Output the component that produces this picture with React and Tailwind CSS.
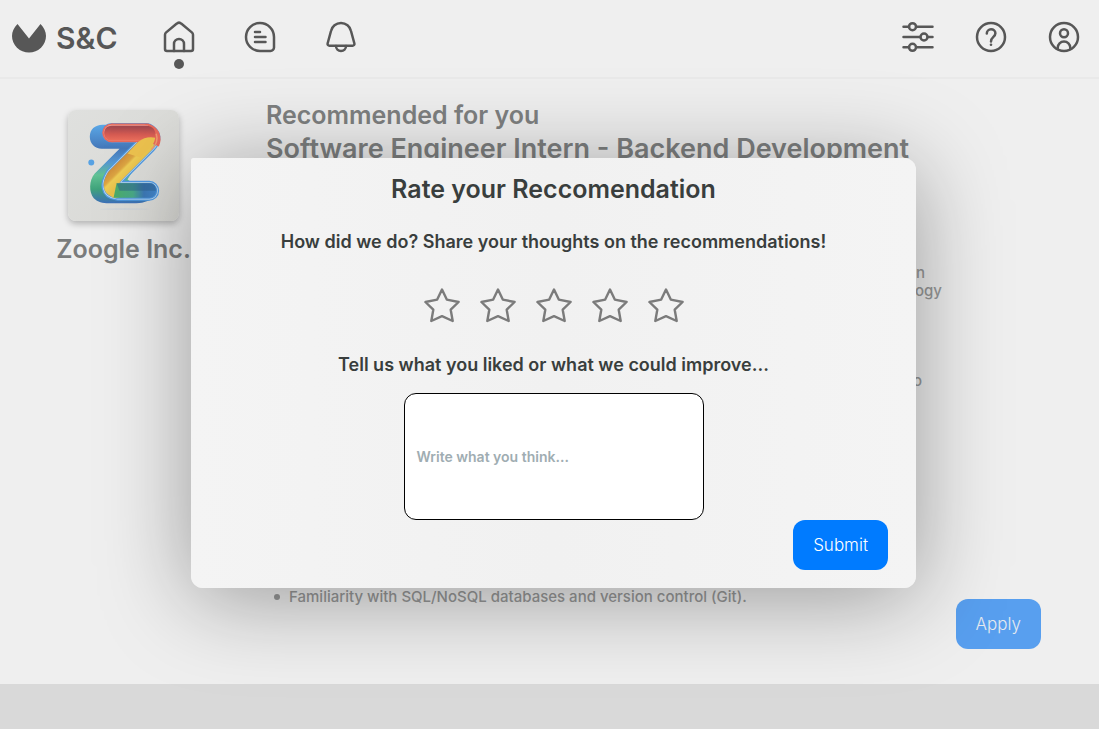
import React from "react";

const line = {
  fill: "none",
  stroke: "currentColor",
  strokeWidth: 2.5,
  strokeLinecap: "round",
  strokeLinejoin: "round",
};

function Icon({ children }) {
  return (
    <svg viewBox="0 0 32 32" className="block size-8" aria-hidden="true" {...line}>
      {children}
    </svg>
  );
}

function HomeIcon() {
  return (
    <Icon>
      <path d="M2 13.8c0-.9.3-1.6.9-2.200L13.500 2.800c1.500-1.500 3.500-1.500 5 0l10.600 8.800c.6.6.9 1.300.9 2.200V28a2 2 0 0 1-2 2H4a2 2 0 0 1-2-2z" />
      <path d="M11 30v-7a5 5 0 0 1 10 0v7" />
    </Icon>
  );
}

function ChatIcon() {
  return (
    <Icon>
      <path d="M16 2a14 14 0 1 0 0 28h10.500a3.500 3.500 0 0 0 3.500-3.500V16A14 14 0 0 0 16 2z" />
      <path d="M11 11h5M11 16h10.500M11 21h10.500" />
    </Icon>
  );
}

function BellIcon() {
  return (
    <Icon>
      <path d="M16 2C11 2 7 5.500 6 10L2.600 22.500A1.800 1.800 0 0 0 4.400 24.700h23.200a1.800 1.800 0 0 0 1.800-2.200L26 10c-1-4.500-5-8-10-8z" />
      <path d="M11 25a5 5 0 0 0 10 0" />
    </Icon>
  );
}

function SlidersIcon() {
  return (
    <Icon>
      <path d="M1.500 5.700H7M15 5.700h15.500M1.500 16H18M26 16h4.500M1.500 26.300H7M15 26.300h15.500" />
      <circle cx="10.500" cy="5.700" r="3.500" />
      <circle cx="22" cy="16" r="3.500" />
      <circle cx="10.500" cy="26.300" r="3.500" />
    </Icon>
  );
}

function HelpIcon() {
  return (
    <Icon>
      <circle cx="16" cy="16" r="14" />
      <path d="M11.800 12.500A4.200 4.200 0 0 1 16 8.300c2.500 0 4.400 1.700 4.400 4 0 3.700-4.400 3.500-4.400 8.200" />
      <circle cx="16" cy="23.700" r="1.300" fill="currentColor" stroke="none" />
    </Icon>
  );
}

function UserIcon() {
  return (
    <Icon>
      <circle cx="16" cy="16" r="14" />
      <circle cx="16" cy="12.300" r="4" />
      <path d="M9.700 28v-1.200a6.300 6.300 0 0 1 12.600 0V28" />
    </Icon>
  );
}

function BrandMark() {
  return (
    <svg viewBox="0 0 34 30" className="block h-[30px] w-[34px]" aria-hidden="true">
      <path
        d="M5.500 1 17 15.500 28.500 1C32 4.500 34 8.500 34 13a17 16.500 0 0 1-34 0C0 8.500 2 4.500 5.500 1z"
        fill="currentColor"
      />
    </svg>
  );
}

function ZoogleLogo() {
  return (
    <svg
      viewBox="0 0 112 112"
      className="block size-[111px] rounded-lg shadow-[0_3px_6px_rgba(0,0,0,0.25)]"
      role="img"
      aria-label="Zoogle logo"
    >
      <defs>
        <linearGradient id="tile" x1="0" y1="0" x2="1" y2="1">
          <stop offset="0" stopColor="#dfe0de" />
          <stop offset="1" stopColor="#d8d8d4" />
        </linearGradient>
        <linearGradient id="back" gradientUnits="userSpaceOnUse" x1="0" y1="15" x2="0" y2="94">
          <stop offset="0" stopColor="#5aa7e6" />
          <stop offset="0.3" stopColor="#4477b9" />
          <stop offset="0.48" stopColor="#5597d0" />
          <stop offset="0.64" stopColor="#62c294" />
          <stop offset="0.82" stopColor="#3fa37b" />
          <stop offset="1" stopColor="#3c6fb8" />
        </linearGradient>
        <linearGradient id="red" gradientUnits="userSpaceOnUse" x1="0" y1="17" x2="0" y2="31">
          <stop offset="0" stopColor="#a3484f" />
          <stop offset="0.55" stopColor="#d55b52" />
          <stop offset="1" stopColor="#ec6f5c" />
        </linearGradient>
        <linearGradient id="gold" gradientUnits="userSpaceOnUse" x1="56" y1="47" x2="68" y2="59">
          <stop offset="0" stopColor="#d08f3c" />
          <stop offset="0.4" stopColor="#dca542" />
          <stop offset="0.55" stopColor="#edcc55" />
          <stop offset="1" stopColor="#e8c04b" />
        </linearGradient>
        <linearGradient id="base" gradientUnits="userSpaceOnUse" x1="48" y1="0" x2="92" y2="0">
          <stop offset="0" stopColor="#4bab6b" />
          <stop offset="0.4" stopColor="#49a887" />
          <stop offset="0.65" stopColor="#3d78b5" />
          <stop offset="1" stopColor="#4389d0" />
        </linearGradient>
      </defs>
      <rect width="112" height="112" fill="url(#tile)" />
      <path
        d="M40 15H35c-8 0-13 5-13 12s5 12 12 12h18L27 64c-6 7-6 19-1 25 4 4 9 5 15 5h28c8 0 14-3 18-6L60 70 82 35z"
        fill="url(#back)"
      />
      <g fill="none" strokeLinecap="round" strokeLinejoin="round">
        <path d="M44 23H79Q87 27 80 34L47 67Q39 80 50 81.500H82" stroke="#4f99e4" strokeWidth="20" />
        <path d="M44 23H79Q87 27 80 34L47 67Q39 80 50 81.500H82" stroke="#c3dcea" strokeWidth="17.500" />
        <path d="M44 23H79Q87 27 80 34L47 67Q39 80 50 81.500H82" stroke="#4b93de" strokeWidth="16" />
        <path d="M79 35 47 67Q40 78 48 81" stroke="url(#gold)" strokeWidth="15.500" />
      </g>
      <path d="M49 74H82c9 0 9 14.500 0 14.500H46z" fill="url(#base)" />
      <path d="M49 74H82c5 0 7 3 6.500 7.500H52z" fill="#2d5f8c" opacity="0.5" />
      <g fill="none" strokeLinecap="round">
        <path d="M44 23H79Q86 26 83 33" stroke="#e8695a" strokeWidth="19" strokeLinecap="butt" />
        <path d="M44 23h.1" stroke="#e8695a" strokeWidth="19" />
        <path d="M44 23H77" stroke="#f09a8e" strokeWidth="16" />
      </g>
      <path d="M44 16h35c7 0 10 5 9 12l-8 3H44c-10 0-10-15 0-15z" fill="url(#red)" />
      <path d="M71 32q8-6 17-4-1 6-5 10L73 48 60 44z" fill="#ecc24e" />
      <path d="M89 24q3 9-5 16" fill="none" stroke="#ee9a70" strokeWidth="1.500" />
      <circle cx="23.500" cy="53" r="3" fill="#57a2e3" />
      <ellipse cx="57" cy="100" rx="25" ry="1" fill="#c9d0d8" opacity="0.6" />
    </svg>
  );
}

function Star({ value }) {
  return (
    <button type="button" aria-label={`${value} of 5 stars`} className="block">
      <svg viewBox="0 0 36 36" className="block size-9" aria-hidden="true">
        <path
          d="M18 1.500 22.800 11.600 34.600 14 26.700 21.700 28.700 33 18 28.200 7.300 33 9.300 21.700 1.400 14 13.200 11.600z"
          fill="none"
          stroke="#7b7b7b"
          strokeWidth="2.4"
          strokeLinejoin="round"
        />
      </svg>
    </button>
  );
}

function Header() {
  return (
    <header className="flex h-[79px] items-start justify-between border-b-2 border-[#e9e9e9] pr-[19px] pl-3 text-[#575757]">
      <nav className="flex items-start" aria-label="Main">
        <a href="#home" className="mt-[22px] flex h-8 items-center gap-[10px] text-[30px] font-semibold">
          <BrandMark />
          <span>S&amp;C</span>
        </a>
        <a href="#jobs" aria-label="Home" className="mt-[21px] ml-[45px] flex flex-col items-center gap-[6px]">
          <HomeIcon />
          <span className="size-[10px] rounded-full bg-current" />
        </a>
        <a href="#messages" aria-label="Messages" className="mt-[21px] ml-[49px]">
          <ChatIcon />
        </a>
        <a href="#alerts" aria-label="Notifications" className="mt-[21px] ml-[49px]">
          <BellIcon />
        </a>
      </nav>
      <div className="mt-[21px] flex gap-[41px]">
        <button type="button" aria-label="Filters">
          <SlidersIcon />
        </button>
        <button type="button" aria-label="Help">
          <HelpIcon />
        </button>
        <button type="button" aria-label="Account">
          <UserIcon />
        </button>
      </div>
    </header>
  );
}

function RateDialog() {
  return (
    <div className="absolute inset-x-0 top-[158px] flex justify-center pl-2">
      <section
        role="dialog"
        aria-labelledby="rate-title"
        className="w-full max-w-[725px] rounded-xl rounded-tl-[3px] bg-linear-to-r from-[#f4f4f4] via-[#f1f1f1] to-[#f4f4f4] shadow-[0_10px_90px_rgba(0,0,0,0.36)]"
      >
        <form
          className="flex flex-col items-center px-7 pt-[15px] pb-[18px] text-[#393e3d]"
          onSubmit={(e) => e.preventDefault()}
        >
          <h2 id="rate-title" className="text-[25px] leading-8 font-semibold">
            Rate your Reccomendation
          </h2>
          <p className="mt-[25px] text-lg leading-6 font-semibold">
            How did we do? Share your thoughts on the recommendations!
          </p>
          <div className="mt-[34px] flex gap-5">
            <Star value={1} />
            <Star value={2} />
            <Star value={3} />
            <Star value={4} />
            <Star value={5} />
          </div>
          <label htmlFor="feedback" className="mt-[29px] text-lg leading-6 font-semibold">
            Tell us what you liked or what we could improve...
          </label>
          <textarea
            id="feedback"
            placeholder="Write what you think..."
            className="mt-4 block h-[127px] w-[300px] resize-none rounded-xl border border-black bg-white px-3 pt-[53px] text-sm font-semibold placeholder:text-[#9fadb2]"
          />
          <button
            type="submit"
            className="h-[50px] self-end rounded-xl bg-[#007bff] px-5 pt-[2px] text-[17px] font-light text-white"
          >
            Submit
          </button>
        </form>
      </section>
    </div>
  );
}

export default function App() {
  return (
    <div className="relative flex min-h-screen flex-col bg-[#efefef] font-['Inter',sans-serif]">
      <Header />
      <main className="flex flex-1 items-start pr-[58px] pb-[35px]">
        <aside className="mt-[31px] ml-[57px] flex w-[133px] shrink-0 flex-col items-center">
          <ZoogleLogo />
          <h2 className="mt-3 text-[25px] leading-8 font-semibold whitespace-nowrap text-[#7a7c7c]">Zoogle Inc.</h2>
        </aside>
        <article className="mt-5 ml-[76px] flex flex-1 flex-col">
          <p className="text-[25px] leading-[33px] font-semibold text-[#7e8080]">Recommended for you</p>
          <h1 className="text-[27px] leading-[33px] font-semibold text-[#7e8080]">
            Software Engineer Intern - Backend Development
          </h1>
          <div className="mt-[99px] w-[676px] text-right text-[15px] leading-[18px] font-medium text-[#989999]">
            <p className="pr-[17px]">in</p>
            <p>technology</p>
            <p className="mt-[72px] pr-5">to</p>
            <ul className="mt-[198px] pl-2 text-left">
              <li className="flex items-center gap-[9px]">
                <span className="size-[6px] rounded-full bg-current" />
                Familiarity with SQL/NoSQL databases and version control (Git).
              </li>
            </ul>
          </div>
          <button
            type="button"
            className="-mt-[7px] h-[50px] self-end rounded-xl bg-[#589fef] px-5 pt-[2px] text-[17px] font-light text-[#e5eaf0]"
          >
            Apply
          </button>
        </article>
      </main>
      <footer className="h-[45px] bg-[#d9d9d9]" />
      <RateDialog />
    </div>
  );
}
